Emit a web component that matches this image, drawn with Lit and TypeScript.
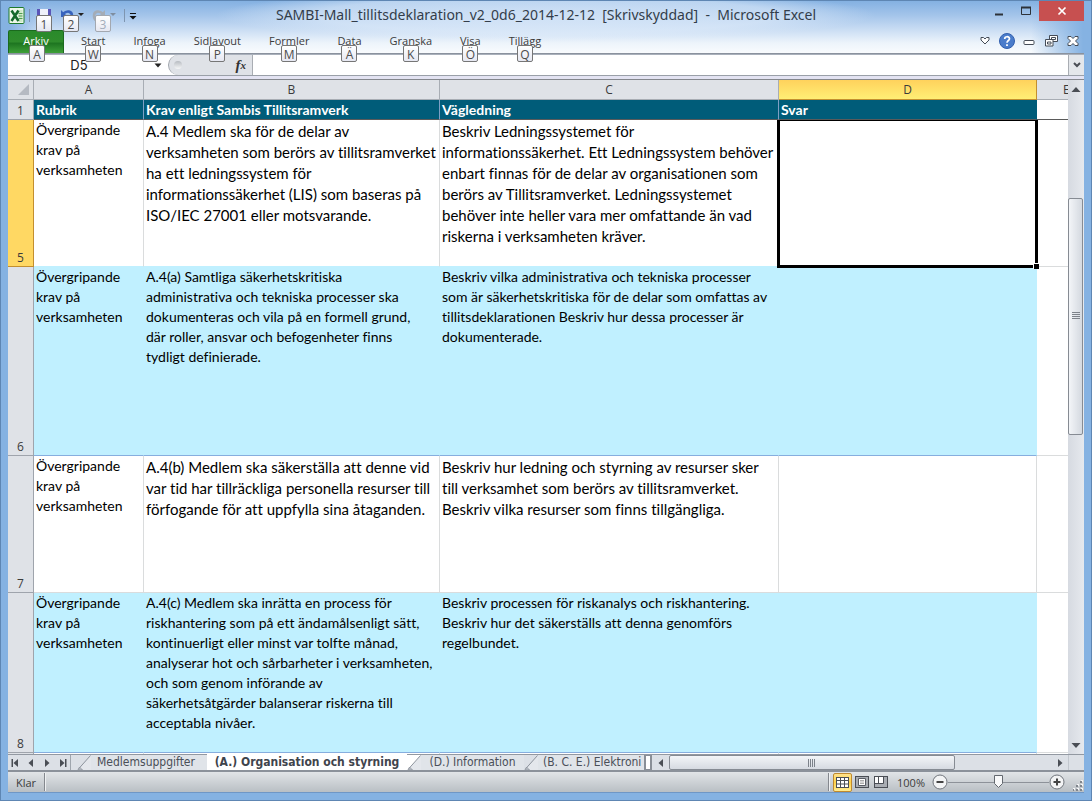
import { LitElement, html, css, svg } from "lit";
import { customElement } from "lit/decorators.js";

interface RibbonTab { label: string; key: string; }
interface Row { n: number; kind: string; head: string[]; req: string[]; guide: string[]; }

const TABS: RibbonTab[] = [
  { label: "Start", key: "W" },
  { label: "Infoga", key: "N" },
  { label: "Sidlayout", key: "P" },
  { label: "Formler", key: "M" },
  { label: "Data", key: "Ä" },
  { label: "Granska", key: "K" },
  { label: "Visa", key: "Ö" },
  { label: "Tillägg", key: "Q" },
];

const HEAD = ["Övergripande", "krav på", "verksamheten"];

const ROWS: Row[] = [
  {
    n: 5, kind: "r5", head: HEAD,
    req: ["A.4 Medlem ska för de delar av", "verksamheten som berörs av tillitsramverket", "ha ett ledningssystem för", "informationssäkerhet (LIS) som baseras på", "ISO/IEC 27001 eller motsvarande."],
    guide: ["Beskriv Ledningssystemet för", "informationssäkerhet. Ett Ledningssystem behöver", "enbart finnas för de delar av organisationen som", "berörs av Tillitsramverket. Ledningssystemet", "behöver inte heller vara mer omfattande än vad", "riskerna i verksamheten kräver."],
  },
  {
    n: 6, kind: "r6 blue", head: HEAD,
    req: ["A.4(a) Samtliga säkerhetskritiska", "administrativa och tekniska processer ska", "dokumenteras och vila på en formell grund,", "där roller, ansvar och befogenheter finns", "tydligt definierade."],
    guide: ["Beskriv vilka administrativa och tekniska processer", "som är säkerhetskritiska för de delar som omfattas av", "tillitsdeklarationen Beskriv hur dessa processer är", "dokumenterade."],
  },
  {
    n: 7, kind: "r7", head: HEAD,
    req: ["A.4(b) Medlem ska säkerställa att denne vid", "var tid har tillräckliga personella resurser till", "förfogande för att uppfylla sina åtaganden."],
    guide: ["Beskriv hur ledning och styrning av resurser sker", "till verksamhet som berörs av tillitsramverket.", "Beskriv vilka resurser som finns tillgängliga."],
  },
  {
    n: 8, kind: "r8 blue", head: HEAD,
    req: ["A.4(c) Medlem ska inrätta en process för", "riskhantering som på ett ändamålsenligt sätt,", "kontinuerligt eller minst var tolfte månad,", "analyserar hot och sårbarheter i verksamheten,", "och som genom införande av", "säkerhetsåtgärder balanserar riskerna till", "acceptabla nivåer."],
    guide: ["Beskriv processen för riskanalys och riskhantering.", "Beskriv hur det säkerställs att denna genomförs", "regelbundet."],
  },
];

const lines = (t: string[]) => t.map((l, i) => (i ? html`<br>${l}` : l));

@customElement("app-root")
export class AppRoot extends LitElement {
  static styles = css`
    :host { display: block; height: 100vh; font-family: "Open Sans", "Noto Sans", sans-serif; color: #3b3b3b; }
    * { box-sizing: border-box; }
    button, input { font: inherit; color: inherit; margin: 0; padding: 0; border: 0; background: none; border-radius: 0; outline: 0; }
    button { display: flex; align-items: center; justify-content: center; }
    svg { display: block; flex: none; }
    .window { height: 100%; display: flex; flex-direction: column; padding: 0 7px 7px; background: #85b2e2; border: 1px solid #5e86b3; overflow: hidden;}
    .top { flex: none; margin: 0 -7px; padding: 0 7px;
      background:
        linear-gradient(90deg, #85b2e2 0, #85b2e2 8px, rgba(133,178,226,0) 40px, rgba(133,178,226,0) calc(100% - 60px), #85b2e2 calc(100% - 8px)),
        radial-gradient(ellipse 330px 26px at 50% 14px, rgba(222,235,250,.75) 0, rgba(222,235,250,.6) 70%, rgba(222,235,250,0) 100%),
        linear-gradient(#84b1e2 0, #a3c4ea 14px, #c8dcf3 28px, #edf4fb 42px, #fafcfe 53px); }
    .title { display: flex; height: 29px; align-items: stretch; }
    .quick { display: flex; align-items: center; flex: 1 1 0; min-width: 0; }
    .quick button { position: relative; height: 29px; }
    .app { width: 17px; }
    .bar { width: 1px; height: 13px; background: #7e95b0; margin: 0 6px 0 4px; }
    .save { width: 16px; }
    .undo { width: 26px; margin-left: 8px; }
    .redo { width: 26px; margin-left: 6px; }
    .bar2 { margin: 0 4px 0 6px; }
    .name { flex: none; margin: 0; font: 400 14px/28px "Noto Sans", sans-serif; color: #333d4a; white-space: pre; }
    .winbtns { flex: 1 1 0; display: flex; justify-content: flex-end; align-items: flex-start; }
    .winbtns button { height: 20px; width: 27px; }
    .winbtns .close { width: 45px; background: #c75050; }
    .key { position: absolute; width: 16px; height: 17px; border: 1px solid #767676; border-radius: 2px; background: linear-gradient(#fff, #e6e8f2); color: #4c4c4c; font-size: 12px; line-height: 17px; text-align: center; z-index: 2; }
    .quick .key { top: 14px; }
    .save .key { left: 0; }
    .undo .key { left: 3px; }
    .redo .key { left: 3px; }
    .quick .dim { color: #a3adbb; border-color: #a3a8b0; }
    .ribbon { display: flex; height: 24px; align-items: stretch; border-bottom: 1px solid #8a929e; }
    .ribbon button { position: relative; font-size: 11px; line-height: 20px; padding: 0 14px 2px; }
    .ribbon .key { top: 15px; left: 50%; margin-left: -8px; line-height: 17px; }
    .ribbon .file { width: 56px; padding: 0 0 2px; margin-right: 3px; height: 23px; color: #fff; border: 1px solid #1b6a1e; border-bottom: 0; border-radius: 2px 2px 0 0; background: linear-gradient(#2a8a2b, #2f8c2c 50%, #1d7420 55%, #3ea038); }
    .ribbon .file .key { top: 14px; margin-left: -7px; }
    .space { flex: 1; }
    .docbtns { display: flex; align-items: flex-start; }
    .ribbon .docbtns button { padding: 0; width: 22px; height: 21px; }
    .body { flex: 1; min-height: 0; display: flex; flex-direction: column; border: solid #6f97c6; border-width: 0 0 1px; background: #fff; }
    .formula { flex: none; display: flex; height: 22px; border-bottom: 1px solid #9aa0a8; border-top: 1px solid #a9b0bb; background: #fff; }
    .box { display: flex; width: 160px; align-items: center; }
    .box input { width: 142px; height: 20px; text-align: center; font-size: 13px; line-height: 20px; color: #222; font-family: Inter, "Noto Sans", sans-serif; }
    .box button { width: 16px; height: 20px; }
    .fx { width: 85px; display: flex; align-items: center; background: #dfe2e7; border-left: 1px solid #a0a5ac; border-right: 1px solid #a9adb3; border-radius: 10px 0 0 10px; justify-content: space-between; padding: 0 6px 0 5px; }
    .knob { width: 8px; height: 8px; border-radius: 50%; background: linear-gradient(#b7bbc1, #f6f7f8); }
    .fx button { font: italic 700 15px/18px "Liberation Serif", serif; color: #333; }
    .fx small { font-size: 11px; }
    .formula .fin { flex: 1; min-width: 0; }
    .expand { width: 16px; background: #e4e7eb; border-left: 1px solid #a9adb3; }
    .split { flex: none; height: 4px; background: #e3e3f2; border-bottom: 1px solid #84878d; }
    .main { flex: 1; min-height: 0; display: flex; }
    .sheet { flex: 1; min-width: 0; overflow: hidden; }
    table { border-collapse: separate; border-spacing: 0; table-layout: fixed; width: 100%; }
    .c0 { width: 26px; } .cA { width: 110px; } .cB { width: 296px; } .cC { width: 339px; } .cD { width: 258px; }
    th, td { padding: 0 0 0 2px; border-right: 1px solid #dadcdd; border-bottom: 1px solid #dadcdd; vertical-align: top; text-align: left; white-space: nowrap; overflow: hidden; }
    .cols th { height: 20px; font-size: 12px; line-height: 19px; font-weight: 400; text-align: center; background: #dfe2e7; border-color: #a8adb4; padding: 0; }
    .cols .sel { background: linear-gradient(#ffd25c, #ffee75); border-color: #c38f2f; }
    .cols .last { padding-left: 26px; text-align: left; border-right: 0; }
    .corner svg { margin: 4px 0 0 9px; }
    .rh { height: 20px; font-size: 12px; line-height: 16px; font-weight: 400; text-align: center; vertical-align: bottom; padding: 0; background: #dfe2e7; border-color: #9fa4ac; }
    .rh.sel { background: #ffd863; border-color: #c38f2f; }
    .r1 td { background: #005c79; color: #fff; font: 700 14px/19px Lato, "Open Sans", sans-serif; font-variant-ligatures: none; border-right-color: #7f9fc4; border-bottom-color: #5a5a5a; }
    .r1 .hd { border-right-color: #005c79; }
    .r1 .e { background: #fff; }
    tr .e { border-right: 0; }
    .txt { font-family: Lato, "Open Sans", sans-serif; font-size: 14px; line-height: 20px; color: #000; font-variant-ligatures: none; }
    .r5 .wide, .r7 .wide { font-size: 15px; line-height: 21px; padding-top: 1px; }
    .r5 td { height: 147px; } .r6 td { height: 189px; } .r7 td { height: 137px; } .r8 td { height: 160px; } .tail td { height: 20px; }
    .blue td { background: #c0f0ff; border-right-color: #c0f0ff; border-bottom-color: #86aede; }
    .r5 td { border-bottom-color: #c0f0ff; }
    .blue .e, .r5 .e { background: #fff; border-bottom-color: #dadcdd; }
    .r5 .active { position: relative; overflow: visible; }
    .ring { position: absolute; inset: 0 -2px -2px -2px; border: solid #000; border-width: 1px 3px 3px; }
    .ring::after { content: ""; position: absolute; right: -4px; bottom: -4px; width: 5px; height: 5px; background: #000; border: solid #fff; border-width: 1px 0 0 1px; box-sizing: content-box; }
    .vscroll { width: 16px; flex: none; background: linear-gradient(90deg, #d6dae1, #e6e9ee); display: flex; flex-direction: column; }
    .vscroll button { height: 18px; width: 16px; flex: none; }
    .vtrack { flex: 1; display: flex; flex-direction: column; }
    .vpre { flex: 100; }
    .vthumb { flex: 236; width: 15px; border: 1px solid #868b93; border-radius: 2px; background: linear-gradient(90deg, #f3f5f8, #d4d9e0); display: flex; align-items: center; justify-content: center; }
    .vpost { flex: 302; }
    .bottom { flex: none; display: flex; height: 18px; background: #dce0e6; border-top: 1px solid #9298a1; border-bottom: 2px solid #8b919a; font: 12px/15px "DejaVu Sans Condensed", "Noto Sans", sans-serif; color: #4a4f58; }
    .nav { width: 63px; display: flex; border-right: 1px solid #9fa5ad; margin-right: 6px; }
    .nav button { flex: 1; }
    .bottom .tab { flex: none; height: 15px; line-height: 15px; background: #e0e4e9; white-space: nowrap; }
    .bottom .t1 { width: 116px; padding-right: 6px; }
    .bottom .on { width: 200px; margin-top: -1px; height: 16px; background: #fff; font-weight: 700; color: #3f444c; }
    .t3 { width: 103px; }
    .bottom .t4 { flex: 0 0 106px; justify-content: flex-start; padding-left: 5px; overflow: hidden; }
    .grab { width: 8px; border: 2px solid #8a8f97; border-width: 1px 2px; background: #fff; flex: none; }
    .harrow { width: 17px; flex: none; }
    .htrack { flex: 1; display: flex; min-width: 0; }
    .hthumb { flex: 286; border: 1px solid #868b93; border-radius: 2px; background: linear-gradient(#f3f5f8, #d6dae1); display: flex; align-items: center; justify-content: center; }
    .hpost { flex: 97; }
    .cornerbox { width: 16px; border-left: 1px solid #c2c7ce; flex: none; }
    .status { flex: none; display: flex; align-items: center; height: 20px; font-size: 11px; background: linear-gradient(#e1e4e7, #b9bfc4); }
    .klar { padding-left: 8px; width: 36px; }
    .sep { width: 2px; height: 18px; background: #84888e; border-right: 1px solid #eef0f2; }
    .status button { width: 19px; height: 18px; }
    .status .view { border: 1px solid #c08a2e; border-radius: 2px; background: linear-gradient(#ffe28a, #ffd24a, #ffec92); margin-left: 3px; height: 19px;}
    .zoomv { width: 42px; text-align: center; }
    .zoom { width: 101px; height: 18px; appearance: none; -webkit-appearance: none; background: linear-gradient(#8d9299, #8d9299) center / 100% 1px no-repeat; }
    .zoom::-webkit-slider-thumb { -webkit-appearance: none; width: 10px; height: 14px; border: 0; background: url("data:image/svg+xml,%3Csvg xmlns='http://www.w3.org/2000/svg' width='10' height='14'%3E%3Cpath d='M.5.5h8v8l-4 4-4-4z' fill='%23f8f9fa' stroke='%2363686f'/%3E%3C/svg%3E") no-repeat; }
    .status .round { width: 16px; }
    .grip { align-self: flex-end; margin: 0 1px 1px 8px; }
  `;

  private badge(key: string, extra = "") {
    return html`<span class="key ${extra}">${key}</span>`;
  }

  private arrow(dir: string, bar = false) {
    const d: Record<string, string> = { left: "M7 1v8L2.500 5z", right: "M3 1v8L7.500 5z", up: "M.500 8L5 3l4.500 5z", down: "M.500 3h9L5 8z" };
    return html`<svg width="10" height="10" viewBox="0 0 10 10" fill="#4a4e55"><path d=${d[dir]}></path>${bar ? svg`<path d=${dir === "left" ? "M.500 1H2v8H.500z" : "M8 1h1.500v8H8z"}></path>` : ""}</svg>`;
  }

  private slant(kind: string) {
    return html`<svg width="14" height="15" viewBox="0 0 14 15"><path d="M0 0h14v15H0z" fill=${kind === "active" ? "#fff" : "#dce0e6"}></path><path d="M1 15L14 0v15z" fill="#e4e7ec"></path><path d="M1 14.500L13.500 .5" stroke="#8d939c" fill="none"></path><path d="M2.500 12l3 3h-4z" stroke="#8d939c" stroke-width=".8" fill="#c3c8cf"></path></svg>`;
  }

  render() {
    return html`
      <div class="window">
        <header class="top">
          <div class="title">
            <div class="quick">
              <button class="app" aria-label="Excel"><svg width="17" height="17" viewBox="0 0 16 17"><rect x=".5" y=".5" width="15" height="16" rx="1" fill="#eef8ea" stroke="#1f7a2e"></rect><path d="M10 3h4v12h-4z" fill="#cfe8c8"></path><path d="M10 6.500h4M10 9h4M10 11.500h4" stroke="#4e9e50"></path><path d="M3 3.500l7 10.500M10 3.500L3 14" stroke="#15692a" stroke-width="2.600"></path></svg></button>
              <span class="bar"></span>
              <button class="save" aria-label="Spara"><svg width="14" height="15" viewBox="0 0 14 15"><path d="M0 1h14v13H0z" fill="#5a55b8"></path><path d="M3 1h8v7H3z" fill="#eef1fa"></path><path d="M4 10h6v4H4z" fill="#ccd"></path></svg>${this.badge("1")}</button>
              <button class="undo" aria-label="Ångra"><svg width="26" height="15" viewBox="0 0 26 15"><path d="M3 6c4-4 9-3 9 2 0 3-2 5-5 6" fill="none" stroke="#3763bd" stroke-width="2.600"></path><path d="M1 2v7h7z" fill="#3763bd"></path><path d="M18 5h6l-3 3z" fill="#222"></path></svg>${this.badge("2")}</button>
              <button class="redo" aria-label="Gör om"><svg width="26" height="15" viewBox="0 0 26 15"><path d="M11 6C7 2 2 3 2 8c0 3 2 5 5 6" fill="none" stroke="#a4acb6" stroke-width="2.600"></path><path d="M13 2v7H6z" fill="#a4acb6"></path><path d="M18 5h6l-3 3z" fill="#7e8da0"></path></svg>${this.badge("3", "dim")}</button>
              <span class="bar bar2"></span>
              <button aria-label="Anpassa"><svg width="8" height="10" viewBox="0 0 8 10"><path d="M1 2.500h6" stroke="#111"></path><path d="M.500 5h7L4 8.500z" fill="#111"></path></svg></button>
            </div>
            <h1 class="name">SAMBI-Mall_tillitsdeklaration_v2_0d6_2014-12-12  [Skrivskyddad]  -  Microsoft Excel</h1>
            <div class="winbtns">
              <button aria-label="Minimera"><svg width="10" height="12" viewBox="0 0 10 12"><path d="M1 9.500h8" stroke="#2d3239" stroke-width="2"></path></svg></button>
              <button aria-label="Maximera"><svg width="10" height="10" viewBox="0 0 10 10"><path d="M.5 1v7.500h9V1" fill="none" stroke="#2d3239"></path><path d="M0 1.500h10" stroke="#2d3239" stroke-width="2"></path></svg></button>
              <button class="close" aria-label="Stäng"><svg width="10" height="10" viewBox="0 0 10 10"><path d="M1.500 1.500l7 7M8.500 1.500l-7 7" stroke="#fff" stroke-width="1.700"></path></svg></button>
            </div>
          </div>
          <nav class="ribbon">
            <button class="file">Arkiv${this.badge("A")}</button>
            ${TABS.map(t => html`<button>${t.label}${this.badge(t.key)}</button>`)}
            <span class="space"></span>
            <div class="docbtns">
              <button aria-label="Minimera menyfliksområdet"><svg width="10" height="9" viewBox="0 0 10 9"><path d="M1 1.500h2.500L5 3l1.500-1.500H9V4L5 8 1 4z" fill="#fff" stroke="#454c57"></path></svg></button>
              <button aria-label="Hjälp"><svg width="16" height="16" viewBox="0 0 16 16"><circle cx="8" cy="8" r="7.500" fill="#4a7ccb" stroke="#315fae"></circle><path d="M5.700 6c0-3 4.800-3 4.800-.2C10.500 7.500 8 7.600 8 9.800" fill="none" stroke="#fff" stroke-width="1.700"></path><path d="M7.100 11.200h1.800V13H7.100z" fill="#fff"></path></svg></button>
              <button aria-label="Minimera fönster"><svg width="12" height="12" viewBox="0 0 12 12"><rect x="1" y="5.500" width="10" height="4" rx="1" fill="#fff" stroke="#454c57"></rect></svg></button>
              <button aria-label="Återställ fönster"><svg width="13" height="12" viewBox="0 0 13 12"><path d="M4.500 .5h8v6h-8z" fill="#fff" stroke="#454c57"></path><path d="M6.500 2.500h4v2h-4z" fill="none" stroke="#454c57"></path><path d="M.500 4.500h7.500v6.500H.500z" fill="#fff" stroke="#454c57"></path><path d="M2.500 7h3.500v2H2.500z" fill="none" stroke="#454c57"></path></svg></button>
              <button aria-label="Stäng fönster"><svg width="12" height="10" viewBox="0 0 12 10"><path d="M1 .5h3l2 2 2-2h3v2L8.500 5 11 7.500v2H8l-2-2-2 2H1v-2L3.500 5 1 2.500z" fill="#fff" stroke="#454c57"></path></svg></button>
            </div>
          </nav>
        </header>
        <div class="body">
          <div class="formula">
            <div class="box"><input aria-label="Namnruta" value="D5"><button aria-label="Visa namn"><svg width="8" height="5" viewBox="0 0 8 5"><path d="M.500 .5h7L4 4.500z" fill="#222"></path></svg></button></div>
            <div class="fx"><span class="knob"></span><button aria-label="Infoga funktion">f<small>x</small></button></div>
            <input class="fin" aria-label="Formelfält">
            <button class="expand" aria-label="Expandera formelfältet"><svg width="8" height="6" viewBox="0 0 8 6"><path d="M1 1l3 3 3-3" fill="none" stroke="#4a4e55" stroke-width="2"></path></svg></button>
          </div>
          <div class="split"></div>
          <div class="main">
            <div class="sheet">
              <table>
                <colgroup><col class="c0"><col class="cA"><col class="cB"><col class="cC"><col class="cD"><col></colgroup>
                <thead>
                  <tr class="cols"><th class="corner"><svg width="12" height="12" viewBox="0 0 12 12"><path d="M12 0v11H1z" fill="#b5bac2"></path></svg></th><th>A</th><th>B</th><th>C</th><th class="sel">D</th><th class="last">E</th></tr>
                </thead>
                <tbody>
                  <tr class="r1"><th class="rh">1</th><td>Rubrik</td><td>Krav enligt Sambis Tillitsramverk</td><td>Vägledning</td><td class="hd">Svar</td><td class="e"></td></tr>
                  ${ROWS.map(r => html`<tr class=${r.kind}>
                    <th class="rh ${r.n === 5 ? "sel" : ""}">${r.n}</th>
                    <td class="txt">${lines(r.head)}</td>
                    <td class="txt wide">${lines(r.req)}</td>
                    <td class="txt wide">${lines(r.guide)}</td>
                    <td class=${r.n === 5 ? "active" : ""}>${r.n === 5 ? html`<div class="ring"></div>` : ""}</td>
                    <td class="e"></td>
                  </tr>`)}
                  <tr class="tail"><th class="rh"></th><td></td><td></td><td></td><td></td><td class="e"></td></tr>
                </tbody>
              </table>
            </div>
            <div class="vscroll">
              <button aria-label="Rulla upp">${this.arrow("up")}</button>
              <div class="vtrack"><span class="vpre"></span><div class="vthumb"><svg width="8" height="8" viewBox="0 0 8 8"><path d="M0 .5h8M0 2.500h8M0 4.500h8M0 6.500h8" stroke="#7d828a"></path></svg></div><span class="vpost"></span></div>
              <button aria-label="Rulla ned">${this.arrow("down")}</button>
            </div>
          </div>
          <div class="bottom">
            <div class="nav">
              <button aria-label="Första bladet">${this.arrow("left", true)}</button><button aria-label="Föregående blad">${this.arrow("left")}</button><button aria-label="Nästa blad">${this.arrow("right")}</button><button aria-label="Sista bladet">${this.arrow("right", true)}</button>
            </div>
            ${this.slant("plain")}<button class="tab t1">Medlemsuppgifter</button><button class="tab on">(A.) Organisation och styrning</button>${this.slant("active")}<button class="tab t3">(D.) Information</button>${this.slant("plain")}<button class="tab t4">(B. C. E.) Elektroni</button><span class="grab"></span>
            <button class="harrow" aria-label="Rulla vänster">${this.arrow("left")}</button>
            <div class="htrack"><div class="hthumb"><svg width="8" height="8" viewBox="0 0 8 8"><path d="M.5 0v8M2.500 0v8M4.500 0v8M6.500 0v8" stroke="#7d828a"></path></svg></div><span class="hpost"></span></div>
            <button class="harrow" aria-label="Rulla höger">${this.arrow("right")}</button>
            <span class="cornerbox"></span>
          </div>
          <footer class="status">
            <span class="klar">Klar</span><span class="sep"></span><span class="space"></span><span class="sep"></span>
            <button class="view" aria-label="Normal"><svg width="13" height="11" viewBox="0 0 13 11"><rect x=".5" y=".5" width="12" height="10" fill="#fff" stroke="#4a4e55"></rect><path d="M0 3.500h13M0 7h13M4.500 0v11M8.500 0v11" stroke="#4a4e55"></path></svg></button>
            <button aria-label="Sidlayoutvy"><svg width="14" height="12" viewBox="0 0 14 12"><rect x=".5" y=".5" width="13" height="11" fill="#a9adb3" stroke="#4a4e55"></rect><path d="M3.500 2.500h7v7h-7z" fill="#fff" stroke="#5a5e65"></path><path d="M5 4.500h4M5 6h4M5 7.500h4" stroke="#999" stroke-width=".8"></path></svg></button>
            <button aria-label="Sidbrytningar"><svg width="14" height="12" viewBox="0 0 14 12"><rect x=".5" y=".5" width="13" height="11" fill="#a9adb3" stroke="#4a4e55"></rect><path d="M1 1h3v6H1zM5 1h4v6H5z" fill="#fff"></path><path d="M4.500 0v7.500M9.500 0v7.500H0" fill="none" stroke="#4a4e55"></path></svg></button>
            <span class="zoomv">100%</span>
            <button class="round" aria-label="Zooma ut"><svg width="16" height="16" viewBox="0 0 16 16"><circle cx="8" cy="8" r="7" fill="#f3f4f5" stroke="#70757c"></circle><path d="M4.500 8h7" stroke="#444" stroke-width="2"></path></svg></button>
            <input class="zoom" type="range" min="0" max="200" value="100" aria-label="Zoom">
            <button class="round" aria-label="Zooma in"><svg width="16" height="16" viewBox="0 0 16 16"><circle cx="8" cy="8" r="7" fill="#f3f4f5" stroke="#70757c"></circle><path d="M4.500 8h7M8 4.500v7" stroke="#444" stroke-width="2"></path></svg></button>
            <svg class="grip" width="10" height="11" viewBox="0 0 10 11" fill="#f4f5f6"><path d="M8 0h2v2H8zM4 4h2v2H4zM8 4h2v2H8zM0 8h2v2H0zM4 8h2v2H4zM8 8h2v2H8z"></path><path d="M7 1h2v2H7zM3 5h2v2H3zM7 5h2v2H7zM0 9h1v2H0zM3 9h2v2H3zM7 9h2v2H7z" fill="#80858c"></path></svg>
          </footer>
        </div>
      </div>`;
  }
}
